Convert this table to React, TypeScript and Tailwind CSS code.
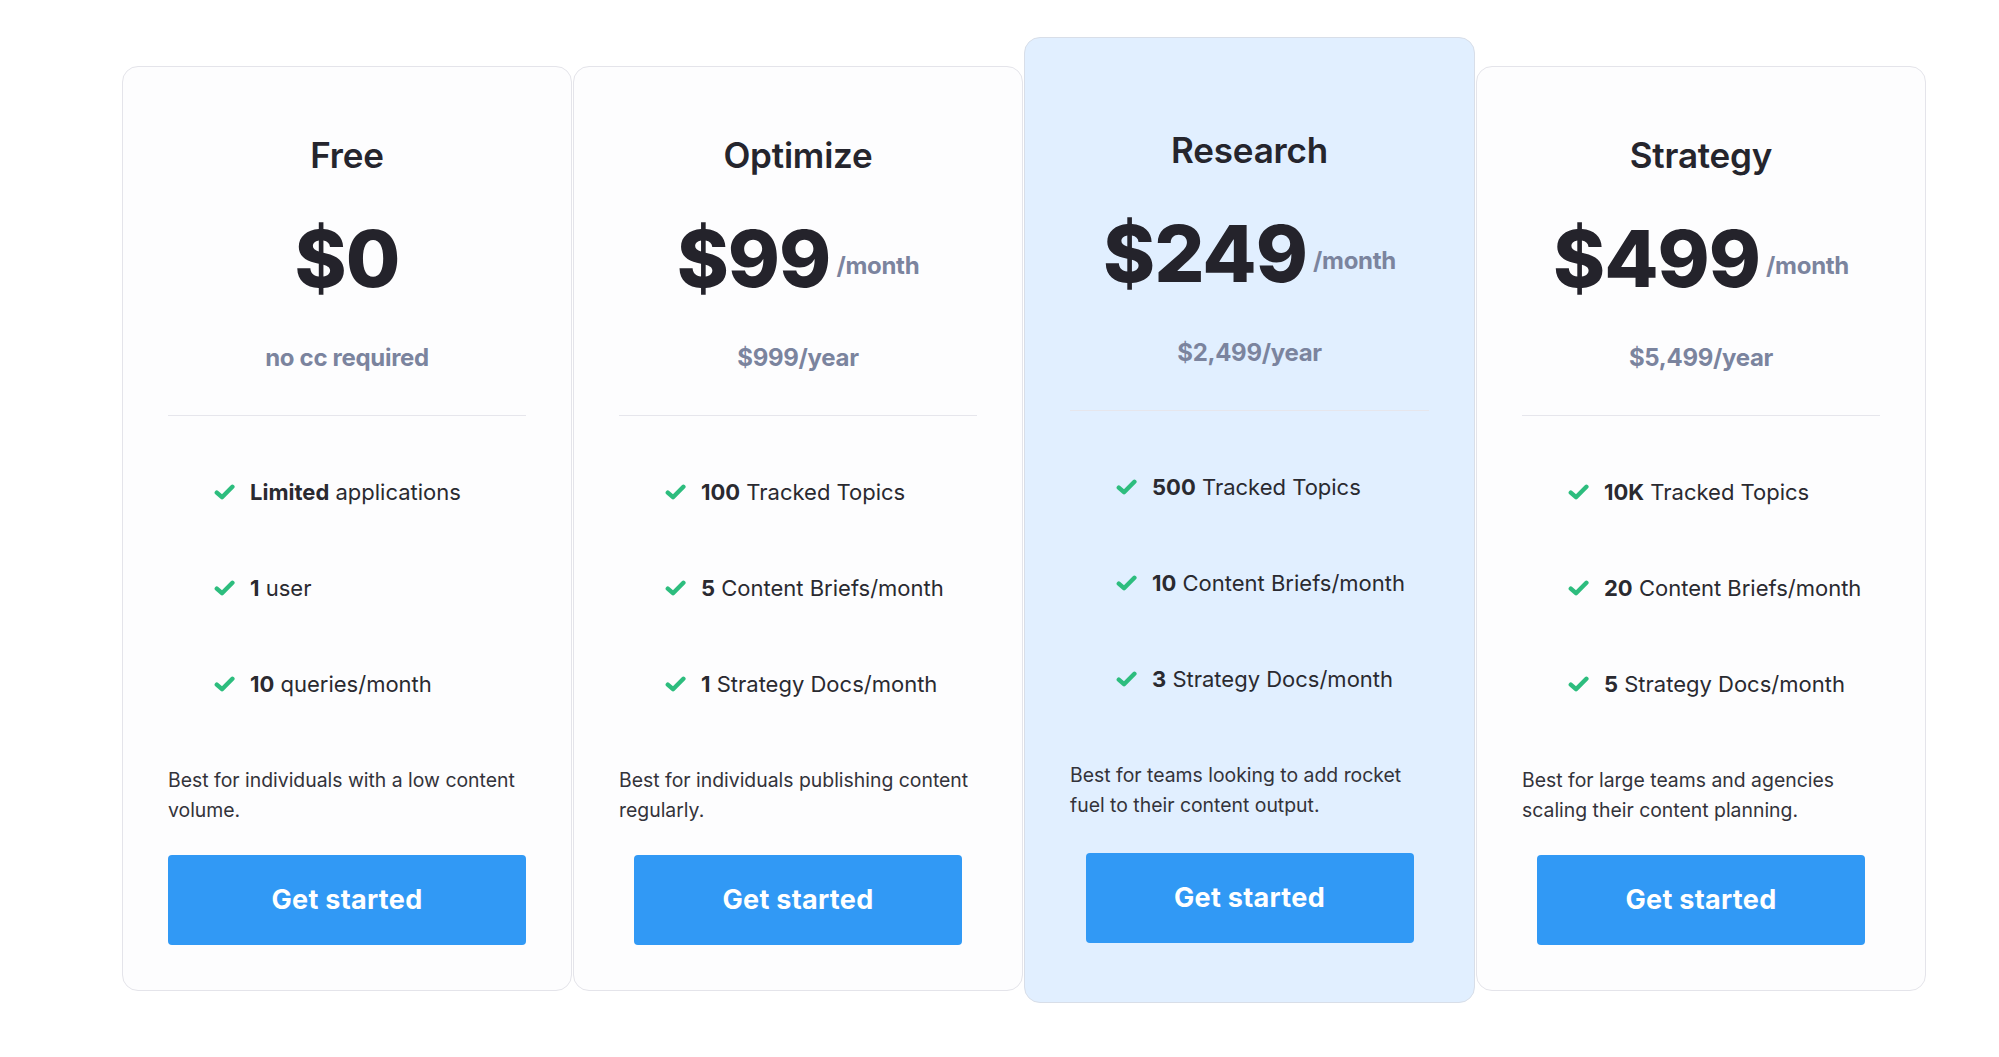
import React from 'react';

type Feature = { bold: string; rest: string };

type Plan = {
  name: string;
  price: string;
  perMonth: boolean;
  yearly: string;
  features: Feature[];
  blurb: string;
  highlight?: boolean;
  wideButton?: boolean;
};

const plans: Plan[] = [
  {
    name: 'Free',
    price: '$0',
    perMonth: false,
    yearly: 'no cc required',
    features: [
      { bold: 'Limited', rest: 'applications' },
      { bold: '1', rest: 'user' },
      { bold: '10', rest: 'queries/month' },
    ],
    blurb: 'Best for individuals with a low content volume.',
    wideButton: true,
  },
  {
    name: 'Optimize',
    price: '$99',
    perMonth: true,
    yearly: '$999/year',
    features: [
      { bold: '100', rest: 'Tracked Topics' },
      { bold: '5', rest: 'Content Briefs/month' },
      { bold: '1', rest: 'Strategy Docs/month' },
    ],
    blurb: 'Best for individuals publishing content regularly.',
  },
  {
    name: 'Research',
    price: '$249',
    perMonth: true,
    yearly: '$2,499/year',
    features: [
      { bold: '500', rest: 'Tracked Topics' },
      { bold: '10', rest: 'Content Briefs/month' },
      { bold: '3', rest: 'Strategy Docs/month' },
    ],
    blurb: 'Best for teams looking to add rocket fuel to their content output.',
    highlight: true,
  },
  {
    name: 'Strategy',
    price: '$499',
    perMonth: true,
    yearly: '$5,499/year',
    features: [
      { bold: '10K', rest: 'Tracked Topics' },
      { bold: '20', rest: 'Content Briefs/month' },
      { bold: '5', rest: 'Strategy Docs/month' },
    ],
    blurb: 'Best for large teams and agencies scaling their content planning.',
  },
];

const Check = () => (
  <svg width="21" height="16" viewBox="0 0 21 16" fill="none" className="shrink-0">
    <path d="M2.8 8.6 L8 13.2 L18.4 2.8" stroke="#2dbd7e" strokeWidth="4.4" strokeLinecap="round" strokeLinejoin="round" />
  </svg>
);

const PlanCard: React.FC<{ plan: Plan }> = ({ plan }) => {
  return (
    <div
      className={
        plan.highlight
          ? 'w-[451px] -mt-[29px] rounded-[16px] border border-[#d8dee8] bg-[#e1efff] px-[45px] pt-[93px] pb-[59px] flex flex-col items-center'
          : 'w-[450px] rounded-[16px] border border-[#e4e4ea] bg-[#fdfdfe] px-[45px] pt-[69px] pb-[45px] flex flex-col items-center'
      }
    >
      <h3 className="text-[35px] leading-[39px] font-semibold text-[#25252d] tracking-[-0.2px]">{plan.name}</h3>

      <div className="mt-[44px] flex items-end">
        <span className="text-[79px] leading-none font-extrabold text-[#24232b] tracking-[-1px]">{plan.price}</span>
        {plan.perMonth && (
          <span className="ml-[6px] mb-[20px] text-[24px] leading-none font-bold text-[#7b849e] tracking-[-0.3px]">/month</span>
        )}
      </div>

      <div className="mt-[48px] text-[24px] leading-none font-bold text-[#7b849e] tracking-[-0.3px]">{plan.yearly}</div>

      <div className="mt-[45px] h-px w-full bg-[#e6e6ec]" />

      <ul className="mt-[61px] self-start pl-[46px] flex flex-col gap-[66px]">
        {plan.features.map((f) => (
          <li key={f.rest} className="flex items-center gap-[15px] h-[30px] text-[22px] text-[#2a2a30]">
            <Check />
            <span>
              <span className="font-bold">{f.bold}</span> {f.rest}
            </span>
          </li>
        ))}
      </ul>

      <p className="mt-[66px] self-stretch text-[19.4px] leading-[30px] text-[#33333a]">{plan.blurb}</p>

      <button
        className={
          (plan.wideButton ? 'w-full' : 'w-[328px]') +
          (plan.highlight ? ' mt-[33px]' : ' mt-[30px]') +
          ' h-[90px] rounded-[4px] bg-[#3199f5] text-white text-[27px] font-bold tracking-[0.3px]'
        }
      >
        Get started
      </button>
    </div>
  );
};

export default function App() {
  return (
    <div className="w-full min-h-[1057px] bg-white font-['Inter',sans-serif]">
      <div className="flex items-start gap-[1px] pl-[122px] pt-[66px]">
        {plans.map((p) => (
          <PlanCard key={p.name} plan={p} />
        ))}
      </div>
    </div>
  );
}
